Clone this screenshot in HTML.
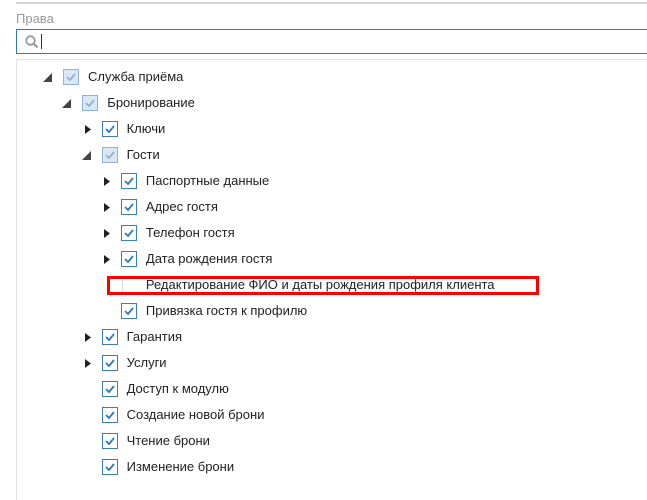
<!DOCTYPE html><html><head><meta charset="utf-8"><style>
body{margin:0;width:647px;height:486px;overflow:hidden;background:#fff;font-family:"Liberation Sans","DejaVu Sans",sans-serif;position:relative}
.a{position:absolute}
.r{position:absolute;height:26px;font-size:13px;color:#222;line-height:26px}
.cb{position:absolute;top:5px;width:14px;height:14px;border:1px solid #3d7cc0;background:#fff}
.cb.p{border-color:#8fb1d6;background:#dbe7f4}
.cb svg{position:absolute;left:2px;top:2px}
.t{position:absolute;top:0}
</style></head><body>
<div class="a" style="left:16px;top:0;width:640px;height:2px;border-bottom:2px solid #d6d6d6"></div>
<div class="a" style="left:16px;top:11px;font-size:13px;color:#999">Права</div>
<div class="a" style="left:16px;top:29px;width:640px;height:23px;border:1px solid #2f78bd;border-right:none"></div>
<svg class="a" style="left:24px;top:34px" width="16" height="16" viewBox="0 0 16 16"><circle cx="6.5" cy="6.5" r="4.3" fill="none" stroke="#9a9a9a" stroke-width="1.8"/><path d="M9.5 9.5L13.5 13.5" stroke="#9a9a9a" stroke-width="2.2"/></svg>
<div class="a" style="left:41px;top:34px;width:1px;height:15px;background:#333"></div>
<div class="a" style="left:16px;top:59px;width:640px;height:440px;border-left:1px solid #e2e2e2;border-top:1px solid #e2e2e2"></div>
<div id="tree"></div>
<div class="a" style="left:107px;top:276px;width:426px;height:13px;border:3px solid #f00"></div>
<script>
var rows=[[0,'o','p','Служба приёма'],[1,'o','p','Бронирование'],[2,'c','c','Ключи'],[2,'o','p','Гости'],[3,'c','c','Паспортные данные'],[3,'c','c','Адрес гостя'],[3,'c','c','Телефон гостя'],[3,'c','c','Дата рождения гостя'],[3,'','n','Редактирование ФИО и даты рождения профиля клиента'],[3,'','c','Привязка гостя к профилю'],[2,'c','c','Гарантия'],[2,'c','c','Услуги'],[2,'','c','Доступ к модулю'],[2,'','c','Создание новой брони'],[2,'','c','Чтение брони'],[2,'','c','Изменение брони']];
var h='';rows.forEach(function(r,i){var y=64+i*26,x=44+r[0]*19.3;
h+='<div class="r" style="left:0;top:'+y+'px;width:647px">';
if(r[1]=='o')h+='<svg class="a" style="left:'+(x-2)+'px;top:8px" width="11" height="11"><path d="M10 1L10 10L1 10Z" fill="#444"/></svg>';
if(r[1]=='c')h+='<svg class="a" style="left:'+(x+1)+'px;top:8px" width="8" height="11"><path d="M1 1L7 5.5L1 10Z" fill="#222"/></svg>';
if(r[2]=='n')h+='<div class="a" style="left:'+(x+20)+'px;top:5px;width:1px;height:16px;background:#ddd"></div>';
else{var col=r[2]=='p'?'#8fb1d6':'#2f78bd';h+='<div class="cb '+(r[2]=='p'?'p':'')+'" style="left:'+(x+19)+'px"><svg width="10" height="10"><path d="M1 5L4 8L9 2" fill="none" stroke="'+col+'" stroke-width="1.8"/></svg></div>';}
h+='<span class="t" style="left:'+(x+44)+'px">'+r[3]+'</span></div>';});
document.getElementById('tree').innerHTML=h;
</script>
</body></html>
